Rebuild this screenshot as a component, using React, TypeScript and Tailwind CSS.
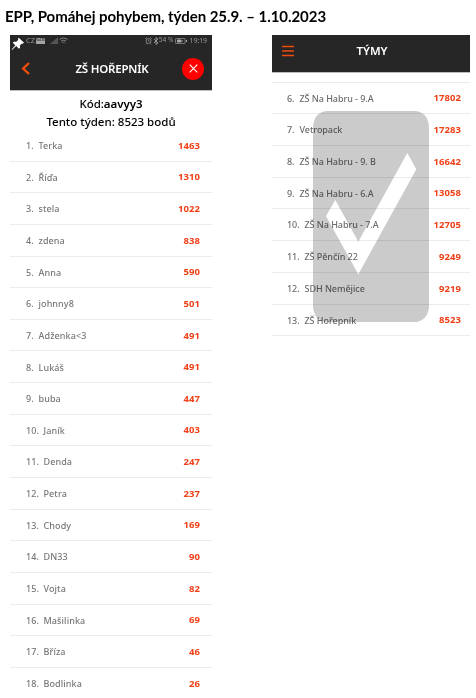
import React from "react";

type Entry = { rank: number; name: string; points: number };

const players: Entry[] = [
  { rank: 1, name: "Terka", points: 1463 },
  { rank: 2, name: "Říďa", points: 1310 },
  { rank: 3, name: "stela", points: 1022 },
  { rank: 4, name: "zdena", points: 838 },
  { rank: 5, name: "Anna", points: 590 },
  { rank: 6, name: "johnny8", points: 501 },
  { rank: 7, name: "Adženka<3", points: 491 },
  { rank: 8, name: "Lukáš", points: 491 },
  { rank: 9, name: "buba", points: 447 },
  { rank: 10, name: "Janík", points: 403 },
  { rank: 11, name: "Denda", points: 247 },
  { rank: 12, name: "Petra", points: 237 },
  { rank: 13, name: "Chody", points: 169 },
  { rank: 14, name: "DN33", points: 90 },
  { rank: 15, name: "Vojta", points: 82 },
  { rank: 16, name: "Mašilinka", points: 69 },
  { rank: 17, name: "Bříza", points: 46 },
  { rank: 18, name: "Bodlinka", points: 26 },
];

const teams: Entry[] = [
  { rank: 6, name: "ZŠ Na Habru - 9.A", points: 17802 },
  { rank: 7, name: "Vetropack", points: 17283 },
  { rank: 8, name: "ZŠ Na Habru - 9. B", points: 16642 },
  { rank: 9, name: "ZŠ Na Habru - 6.A", points: 13058 },
  { rank: 10, name: "ZŠ Na Habru - 7.A", points: 12705 },
  { rank: 11, name: "ZŠ Pěnčín 22", points: 9249 },
  { rank: 12, name: "SDH Nemějice", points: 9219 },
  { rank: 13, name: "ZŠ Hořepník", points: 8523 },
];

function Row({ entry, team }: { entry: Entry; team?: boolean }) {
  return (
    <li
      className={`flex items-center justify-between whitespace-nowrap border-b border-[#ebebeb] pt-px text-[9px] font-medium ${
        team
          ? "h-[31.72px] pl-[15px] pr-[9px] tracking-[-0.05px] text-[#6c6c6c]"
          : "h-[31.65px] pl-4 pr-3 tracking-[0.1px] text-[#777]"
      }`}
    >
      <span className="flex">
        <span className={entry.rank < 10 ? "w-[12.5px]" : "w-[17.5px]"}>{entry.rank}.</span>
        <span>{entry.name}</span>
      </span>
      <span className="text-[9.5px] font-bold tracking-[0.05px] text-[#f04018]">{entry.points}</span>
    </li>
  );
}

function StatusBar() {
  return (
    <div className="flex h-[11px] items-center justify-between pl-[16px] pr-[5px] text-[8px] leading-none text-[#999]">
      <div className="flex items-center">
        <span className="text-[7.5px]">CZ</span>
        <span className="ml-px flex h-[6px] w-[9px] items-center justify-center overflow-hidden bg-[#a5a5a5] text-[3px] font-bold text-[#333]">VoLTE</span>
        <svg className="ml-[5px] h-[7px] w-[8px]" viewBox="0 0 8 7"><path d="M0 7 8 0v7z" fill="#555" /></svg>
        <svg className="ml-[1px] h-[7px] w-[9px]" viewBox="0 0 9 7" fill="none" stroke="#888">
          <path d="M.5 2.3q4-3 8 0M2 4.2q2.5-2 5 0M3.5 5.8q1-1 2 0" />
        </svg>
      </div>
      <div className="flex items-center">
        <svg className="h-[8px] w-[7px]" viewBox="0 0 7 8" fill="none" stroke="#999" strokeWidth=".8">
          <circle cx="3.5" cy="4" r="2.5" /><path d="M3.5 2.7V4l1 .7M.3 1.7 1.8.5M6.7 1.7 5.2.5M1.5 6.5l-.7.9M5.5 6.5l.7.9" />
        </svg>
        <svg className="ml-[1px] h-[8px] w-[6px]" viewBox="0 0 6 8" fill="none" stroke="#aaa" strokeWidth=".8">
          <path d="m1 2 4 4-2 1.6V.4L5 2 1 6" />
        </svg>
        <span className="text-[6.6px]">54 %</span>
        <svg className="ml-px h-[6px] w-[12px]" viewBox="0 0 12 6">
          <rect x=".4" y=".4" width="9.7" height="5.2" rx="1" fill="none" stroke="#999" strokeWidth=".8" />
          <path d="M2 1.5h4v3H2zM6 2.5h2v1H6zM11 2h1v2h-1z" fill="#aaa" />
        </svg>
        <span className="ml-[3px] text-[7px] tracking-[-0.1px]">19:19</span>
      </div>
    </div>
  );
}

function PlayersPanel() {
  return (
    <section className="relative w-[202px]">
      <header className="h-[56px] border-b border-[#bdbdbd] bg-[#262626]">
        <StatusBar />
        <div className="flex h-[45px] items-center justify-between pl-[11px] pr-2">
          <svg className="h-[13px] w-[10px]" viewBox="0 0 10 13" fill="none" stroke="#f44d0b" strokeWidth="2.4">
            <path d="M8 1 2.2 6.5 8 12" />
          </svg>
          <h2 className="ml-[11px] text-[11.5px] font-semibold tracking-[-0.2px] text-white">ZŠ HOŘEPNÍK</h2>
          <span className="flex h-[22px] w-[22px] items-center justify-center rounded-full bg-[#fe0000]">
            <svg className="h-[9px] w-[9px]" viewBox="0 0 9 9" stroke="#fff" strokeWidth="1.1"><path d="m.7.7 7.6 7.6M8.3.7.7 8.3" /></svg>
          </span>
        </div>
      </header>
      <div className="flex h-[39px] flex-col items-center pt-[3.5px] text-[11.5px] font-medium leading-[18.5px] text-black">
        <p className="tracking-[-0.05px]">Kód:<b className="font-semibold">aavyy3</b></p>
        <p>Tento týden: 8523 bodů</p>
      </div>
      <ol>{players.map((p) => <Row key={p.rank} entry={p} />)}</ol>
      <svg className="absolute left-[1px] top-[2px] h-[14px] w-[14px]" viewBox="0 0 14 14">
        <path d="m7.8.8 5.2 5-1.2 1-.9-.4-2 2 .2 2.3-1.2 1-2.7-2.6L1 13l-.4-.4L4.3 8.2 1.7 5.7l1.2-1 2.4.1 2-2-.5-1z" fill="#fff" />
      </svg>
    </section>
  );
}

function TeamsPanel() {
  return (
    <section className="relative w-[198px]">
      <header className="flex h-[38px] items-center border-b border-[#bdbdbd] bg-[#262626] pb-[5px] pl-[10px]">
        <svg className="h-[12px] w-[12px]" viewBox="0 0 12 12" stroke="#ee4b0c" strokeWidth="1.5">
          <path d="M0 1.5h12M0 6h12M0 10.5h12" />
        </svg>
        <h2 className="w-[156px] text-center text-[11.5px] font-semibold text-white">TÝMY</h2>
      </header>
      <div className="h-[9.5px] border-b border-[#ebebeb]" />
      <ol>{teams.map((t) => <Row key={t.rank} entry={t} team />)}</ol>
      <svg className="absolute left-[41px] top-[76px] h-[211px] w-[116px] mix-blend-multiply" viewBox="0 0 116 211">
        <path
          fill="#cbcbcb"
          fillRule="evenodd"
          d="M13 0h90q13 2 13 18v176q0 14-12 17H12Q0 208 0 194V18Q0 2 13 0ZM22.3 89 13 105l32.3 58.3L103.3 58.3 94.3 42l-49 88.7Z"
        />
      </svg>
    </section>
  );
}

export default function App() {
  return (
    <main className="h-[698px] w-[476px] overflow-hidden bg-white font-['Noto_Sans',sans-serif]">
      <h1 className="h-[35px] whitespace-nowrap pl-[5px] pt-[6px] font-['Lato',sans-serif] text-[15px] font-bold leading-[20px] tracking-[-0.05px] text-black">
        EPP, Pomáhej pohybem, týden 25.9. – 1.10.2023
      </h1>
      <div className="flex items-start gap-[60px] pl-[10px]">
        <PlayersPanel />
        <TeamsPanel />
      </div>
    </main>
  );
}
